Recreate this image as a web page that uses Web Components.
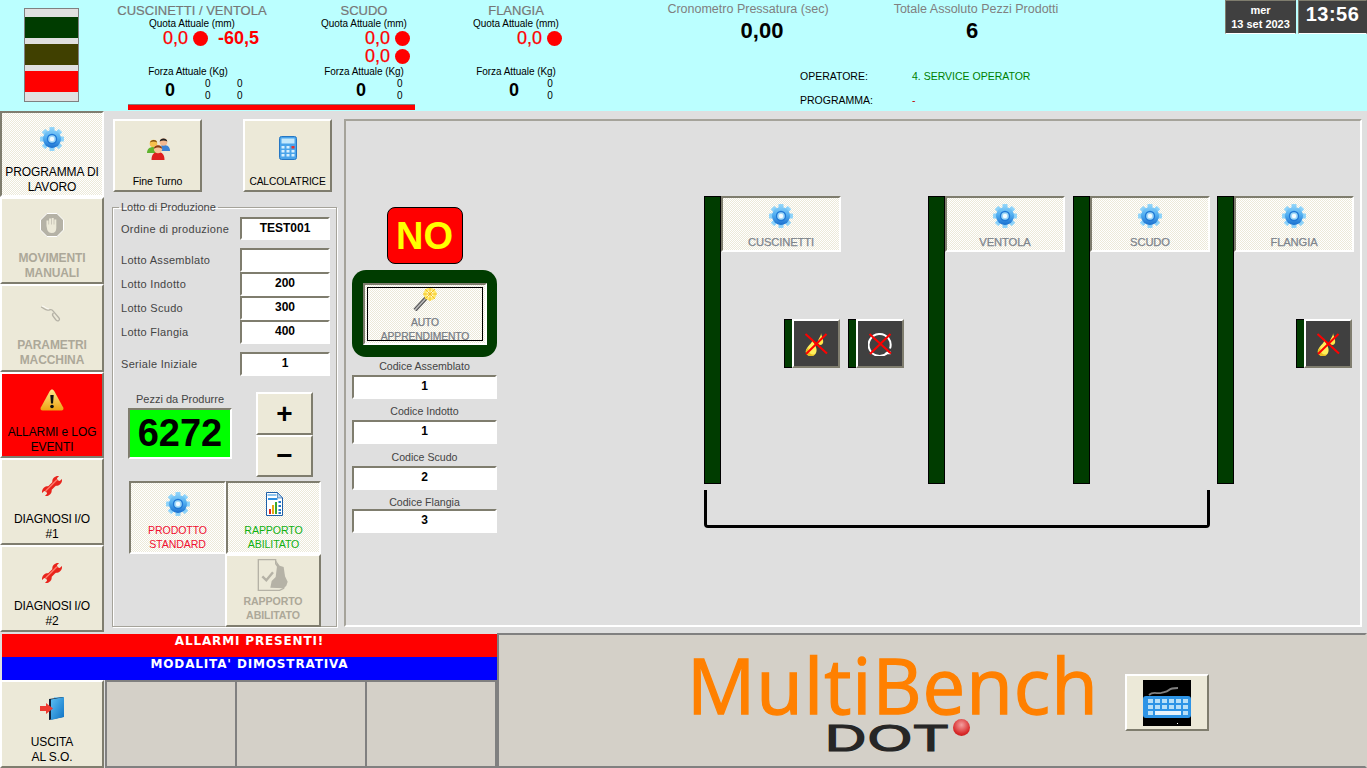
<!DOCTYPE html>
<html lang="it">
<head>
<meta charset="utf-8">
<title>MultiBench DOT</title>
<style>
  html, body { margin: 0; height: 100%; overflow: hidden; background: #dfdfdf; }
  body { font-family: "Liberation Sans", Arial, sans-serif; font-size: 12px; }
</style>
</head>
<body>

<hmi-screen>
  <hmi-header slot="header"></hmi-header>

  <hmi-nav slot="nav">
    <hmi-button icon="gear" variant="pressed" style="--label-bottom:0">PROGRAMMA DI<br>LAVORO</hmi-button>
    <hmi-button icon="stop" variant="disabled">MOVIMENTI<br>MANUALI</hmi-button>
    <hmi-button icon="wire" variant="disabled" style="--label-bottom:2px">PARAMETRI<br>MACCHINA</hmi-button>
    <hmi-button icon="warning" variant="alarm">ALLARMI e LOG<br>EVENTI</hmi-button>
    <hmi-button icon="wrench" style="word-spacing:-2px">DIAGNOSI&nbsp; I/O<br>#1</hmi-button>
    <hmi-button icon="wrench" style="word-spacing:-2px">DIAGNOSI&nbsp; I/O<br>#2</hmi-button>
  </hmi-nav>

  <hmi-lot-panel slot="lot"></hmi-lot-panel>
  <hmi-machine-panel slot="machine"></hmi-machine-panel>
  <hmi-footer slot="footer"></hmi-footer>
</hmi-screen>

<script>
  /* shared look of the old Windows controls */
  const BEVEL = `
    .raised { background: #ece9d8; border: 2px solid; border-color: #fff #7f7d6e #7f7d6e #fff; }
    .sunken { background: #fff; border: 2px solid; border-color: #7f7d6e #fff #fff #7f7d6e; }
    * { box-sizing: border-box; }
  `;

  const gearTeeth = [0, 45, 90, 135, 180, 225, 270, 315]
    .map(a => `<rect x="9.500" y="0" width="5" height="6.500" rx=".6" transform="rotate(${a} 12 12)"/>`).join('');

  const ICONS = {
    gear: `<defs><linearGradient id="g" gradientUnits="userSpaceOnUse" x1="0" y1="0" x2="0" y2="24">
        <stop offset="0" stop-color="#96d8fb"/><stop offset=".45" stop-color="#52aef0"/><stop offset="1" stop-color="#0a5cc4"/></linearGradient></defs>
      <g fill="url(#g)">${gearTeeth}<circle cx="12" cy="12" r="9"/></g>
      <circle cx="12" cy="12" r="5.200" fill="#1f78d6"/><circle cx="12" cy="12" r="3.800" fill="#9fd8f8"/><circle cx="12" cy="12" r="2.200" fill="#f4fbff"/>`,
    stop: `<path d="M7 .5h10L23.500 7v10L17 23.500H7L.5 17V7z" fill="#b5b2a6" stroke="#fff" stroke-width="1"/>
      <path d="M6.500 13V7.500h2v4h.6V5.500h2v6h.6V5h2v6.500h.6V6.500h2V15c0 3-1.500 5-4.500 5-2.500 0-3.500-1-4.500-3z" fill="#ece9d8"/>`,
    wire: `<path d="M1 7c3 1 4 4 8 3 2-.5 3-1 4 1l6 7c1.500 2-1 4-3 2l-3-4c-1-1-.5-2 .5-3" fill="none" stroke="#b5b2a6" stroke-width="1.300"/>
      <path d="M2 6c3 0 4 3 7 3" fill="none" stroke="#fff" stroke-width=".8"/>`,
    warning: `<defs><linearGradient id="w" x1="0" y1="0" x2="0" y2="1"><stop offset="0" stop-color="#fde98a"/><stop offset="1" stop-color="#eea210"/></linearGradient></defs>
      <path d="M12 1.500c1 0 1.600.6 2.200 1.600l9 16.500c.8 1.600 0 3-1.800 3H2.600c-1.800 0-2.600-1.400-1.800-3l9-16.500C10.400 2.100 11 1.500 12 1.500z" fill="url(#w)"/>
      <path d="M10.300 7h3.400l-.7 8.500h-2z" fill="#111"/><circle cx="12" cy="18.500" r="1.800" fill="#111"/>`,
    wrench: `<g transform="rotate(45 12 12)" fill="#e8231b">
        <rect x="9.500" y="7" width="5" height="10"/>
        <path d="M7.500 5C7.500 2.500 8.500 1 10 0v3l2 1 2-1V0c1.500 1 2.500 2.500 2.500 5 0 2.500-1.500 3.500-2 4h-5c-.5-.5-2-1.500-2-4z"/>
        <path d="M7.500 19c0 2.500 1 4 2.500 5v-3l2-1 2 1v3c1.500-1 2.500-2.500 2.500-5 0-2.500-1.500-3.500-2-4h-5c-.5.500-2 1.500-2 4z"/>
        <rect x="10.300" y="4" width="1.400" height="16" fill="#ff7a6a"/>
      </g>`,
    users: `<path d="M1 17c0-4 2.500-6 6.500-6s6 2 6 6z" fill="#5fb32e"/><circle cx="7.500" cy="7.500" r="3.800" fill="#f6c04c"/><path d="M4 6.500C4.500 3.500 10.500 3 11 6.500 9 5 6 5 4 6.500z" fill="#7a4a10"/>
      <path d="M12 15c0-4 2.500-6 6-6s6 2 6 6z" fill="#3a82d6"/><circle cx="17.500" cy="6" r="3.800" fill="#f2b890"/><path d="M13.700 5.500C14 1.500 21 1.500 21.300 5.500 19 4 16 4 13.700 5.500z" fill="#222"/>
      <path d="M5.500 24c0-5.500 2.500-8 6.500-8s6.500 2.500 6.500 8z" fill="#df1f1f"/><circle cx="12" cy="13" r="4.200" fill="#f8c498"/><path d="M7.800 13C8 8 16 8 16.200 13 14 11 10 11 7.800 13z" fill="#8a3c10"/>`,
    calc: `<rect x="3.500" y="0.500" width="17" height="23" rx="2" fill="#4aa4ea" stroke="#2476c4"/>
      <rect x="5.500" y="2.500" width="13" height="5" fill="#c4e8fb"/>
      <g fill="#d6effd"><rect x="5.500" y="10" width="3" height="2.500"/><rect x="10.500" y="10" width="3" height="2.500"/>
      <rect x="5.500" y="14" width="3" height="2.500"/><rect x="10.500" y="14" width="3" height="2.500"/><rect x="15.500" y="14" width="3" height="2.500"/>
      <rect x="5.500" y="18" width="3" height="2.500"/><rect x="10.500" y="18" width="3" height="2.500"/><rect x="15.500" y="18" width="3" height="2.500"/></g>
      <rect x="15.500" y="10" width="3" height="2.500" fill="#e8302a"/>`,
    wand: `<path d="M2 23L14 10" stroke="#555" stroke-width="4"/><path d="M2 23L14 10" stroke="#bbb" stroke-width="1.600"/>
      <circle cx="17" cy="7" r="6.500" fill="#ffe96a"/><circle cx="17" cy="7" r="3.500" fill="#fffbd0"/>
      <path d="M17 0v14M10 7h14M12 2l10 10M22 2L12 12" stroke="#f4c020" stroke-width="1"/>`,
    report: `<path d="M4.500 .5h11l5 5.500v17.500h-16z" fill="#fff" stroke="#1d5fa8"/><path d="M15.500 .5v5.500h5z" fill="#bcd8f0" stroke="#1d5fa8" stroke-width=".6"/>
      <rect x="6" y="6" width="9.500" height="2" fill="#2f8fe0"/><rect x="5.500" y="2" width="9" height="2" fill="#8ec4ee"/>
      <rect x="7" y="17" width="2" height="5" fill="#e02a20"/><rect x="10" y="13" width="2" height="9" fill="#e8a810"/><rect x="13" y="10" width="2" height="12" fill="#3aa82c"/>
      <g fill="#2478c8"><rect x="16.500" y="9" width="2.500" height="2"/><rect x="16.500" y="13" width="2.500" height="2"/><rect x="16.500" y="17" width="2.500" height="2"/><rect x="16.500" y="20" width="2.500" height="2"/></g>`,
    reportoff: `<path d="M1 .5h13v3L20 12v10l-3 1.500H1z" fill="none" stroke="#b5b2a6" stroke-width="1"/>
      <path d="M14 1l3 4 3 1 1 7 2 4-1 3-2 2-10-.5 1-5 3-3 1-8z" fill="#b5b2a6"/>
      <path d="M4 13l3 3 5-6" fill="none" stroke="#b5b2a6" stroke-width="1.800"/>`,
    door: `<defs><linearGradient id="d" x1="0" y1="0" x2="1" y2="1"><stop offset="0" stop-color="#5cc0f4"/><stop offset="1" stop-color="#0e72c4"/></linearGradient></defs>
      <rect x="14" y="1" width="10" height="20" fill="#8fcdf0"/><path d="M9 3l14-2v20l-14 3z" fill="#12233a"/><path d="M11 3.500l13-2.500v20l-13 3z" fill="url(#d)"/>
      <path d="M0 10h6V7l7 5.500L6 18v-3H0z" fill="#ee3a30"/>`,
    keyboard: `<rect width="48" height="46" fill="#000"/>
      <path d="M6 15c4-4 8-1 12-2s6-1 8-3 6-2 9-2" fill="none" stroke="#808080" stroke-width="1.800"/>
      <path d="M3 16h42q3 0 3 3v16q0 3-3 3H3q-3 0-3-3V19q0-3 3-3z" fill="#2d94e6"/>
      <g fill="#b8e0f8">
        <rect x="5" y="19" width="5" height="4"/><rect x="12" y="19" width="5" height="4"/><rect x="19" y="19" width="5" height="4"/><rect x="26" y="19" width="5" height="4"/><rect x="33" y="19" width="5" height="4"/>
        <rect x="40" y="19" width="5" height="4"/><rect x="5" y="25" width="5" height="4"/><rect x="12" y="25" width="5" height="4"/><rect x="19" y="25" width="5" height="4"/><rect x="26" y="25" width="5" height="4"/>
        <rect x="33" y="25" width="5" height="4"/><rect x="40" y="25" width="5" height="4"/><rect x="5" y="31" width="5" height="4"/><rect x="12" y="31" width="26" height="4" fill="#e8f4fc"/><rect x="40" y="31" width="5" height="4"/>
      </g><rect x="34" y="43" width="1" height="1" fill="#fff"/>`,
    flameoff: `<path d="M8.500 6C10 10 4 13 2 18c-1 4 2 6 5 6 4 0 6-3 5.500-7C12 13 8.500 10 8.500 6z" fill="#ffef5a"/><path d="M2 18c-1 4 2 6 5 6 1.500 0 3-.5 4-1.500C7 23 4 21 4.500 15.500z" fill="#e8c020"/>
      <path d="M17 1c.5 3-4 7-3 10 1 2.500 4 2.500 5 0s-1.500-7-2-10z" fill="#ffe84a"/>
      <path d="M1.500 2L23 21.500M22.500 2L2 22" stroke="#f00" stroke-width="2"/>`,
    ringoff: `<path d="M20 20A11 11 0 1 1 22 16.500" fill="none" stroke="#fff" stroke-width="2"/><path d="M17 21.500h5v-2" fill="none" stroke="#fff" stroke-width="1.500"/>
      <path d="M1.500 2L23 21.500M22.500 2L2 22" stroke="#f00" stroke-width="2"/>`
  };

  class HmiIcon extends HTMLElement {
    connectedCallback() {
      const name = this.getAttribute('name');
      const size = this.getAttribute('size') || 24;
      const box = name === 'keyboard' ? '0 0 48 46' : '0 0 24 24';
      const height = name === 'keyboard' ? 46 : size;
      this.attachShadow({ mode: 'open' }).innerHTML = `
        <style>:host { display: block; line-height: 0; } svg { display: block; }</style>
        <svg xmlns="http://www.w3.org/2000/svg" width="${size}" height="${height}" viewBox="${box}">${ICONS[name] || ''}</svg>`;
    }
  }
  customElements.define('hmi-icon', HmiIcon);

  /* Push button with icon over a two line caption. variant: raised, pressed, disabled, alarm */
  class HmiButton extends HTMLElement {
    connectedCallback() {
      const icon = this.getAttribute('icon');
      const size = this.getAttribute('icon-size') || 24;
      const variant = this.getAttribute('variant') || 'raised';
      this.attachShadow({ mode: 'open' }).innerHTML = `
        <style>
          ${BEVEL}
          :host { display: block; color: #000; font: 12px/15px "Liberation Sans", Arial, sans-serif; letter-spacing: -.1px; }
          .btn { height: 100%; display: flex; flex-direction: column; align-items: center;
                 padding-top: var(--icon-top, 14px); text-align: center; white-space: nowrap; }
          .label { margin-top: auto; margin-bottom: var(--label-drop, 0); padding-bottom: var(--label-bottom, 1px);
                   line-height: var(--line, 15px); color: var(--text, inherit); -webkit-text-stroke: var(--ink, 0) currentColor; }
          .pressed { background: repeating-conic-gradient(#fff 0 25%, #ece9d8 0 50%) 0 0 / 2px 2px;
                     border: 2px solid; border-color: #7f7d6e #fff #fff #7f7d6e; }
          .disabled .label { color: #aca899; font-weight: bold; }
          .alarm { background: #f00; }
        </style>
        <div class="btn ${variant === 'pressed' ? 'pressed' : 'raised'} ${variant}">
          ${icon ? `<hmi-icon name="${icon}" size="${size}"></hmi-icon>` : ''}
          <div class="label"><slot></slot></div>
        </div>`;
    }
  }
  customElements.define('hmi-button', HmiButton);

  class HmiScreen extends HTMLElement {
    constructor() {
      super();
      this.attachShadow({ mode: 'open' }).innerHTML = `
        <style>
          :host { display: grid; width: 1367px; height: 768px; overflow: hidden;
                  grid-template: 111px 521px 136px / 104px 233px 1fr;
                  grid-template-areas: "h h h" "n l m" "f f f"; }
          ::slotted([slot=header]) { grid-area: h; }
          ::slotted([slot=nav]) { grid-area: n; }
          ::slotted([slot=lot]) { grid-area: l; }
          ::slotted([slot=machine]) { grid-area: m; }
          ::slotted([slot=footer]) { grid-area: f; }
        </style>
        <slot name="header"></slot><slot name="nav"></slot><slot name="lot"></slot>
        <slot name="machine"></slot><slot name="footer"></slot>`;
    }
  }
  customElements.define('hmi-screen', HmiScreen);

  class HmiNav extends HTMLElement {
    constructor() {
      super();
      this.attachShadow({ mode: 'open' }).innerHTML = `
        <style>
          :host { display: grid; grid-template-rows: 86px 87px 88px 86px 87px 87px; }
          ::slotted(*) { --icon-top: 14px; }
        </style>
        <slot></slot>`;
    }
  }
  customElements.define('hmi-nav', HmiNav);

  /* One measuring axis of the header */
  class HmiAxis extends HTMLElement {
    connectedCallback() {
      const a = n => this.getAttribute(n);
      const valueX = a('value-x');
      const quote = (a('quote') || '0,0').split('|');
      const extra = a('extra');
      const small = (a('small') || '1').split('');
      const rows = quote.map((q, i) => `
        <div class="quote"><b>${q}</b><i></i>${i === 0 && extra ? `<b class="extra">${extra}</b>` : ''}</div>`).join('');
      const cols = small.map(() => '<div class="small"><span>0</span><span>0</span></div>').join('');
      this.attachShadow({ mode: 'open' }).innerHTML = `
        <style>
          ${BEVEL}
          :host { display: flex; flex-direction: column; align-items: center; width: var(--w); height: 104px;
                  font: 10px/10px "Liberation Sans", Arial, sans-serif; color: #000; padding-top: 3px; box-sizing: border-box; }
          .title { font-size: 13px; line-height: 15px; color: #777; white-space: nowrap; -webkit-text-stroke: .2px #777; }
          .cap { margin-top: 1px; white-space: nowrap; letter-spacing: -.05px; }
          .vals { align-self: stretch; height: 37px; padding-left: ${valueX}px; }
          .quote { display: flex; align-items: center; height: 18px; color: #f00; }
          .quote b { font: 18px/18px "Liberation Sans", Arial, sans-serif; width: 26px; text-align: right; white-space: nowrap; -webkit-text-stroke: .25px #f00; }
          .quote i { width: 15px; height: 15px; border-radius: 50%; background: #f00; margin-left: 5px; }
          .quote .extra { font-weight: bold; margin-left: 10px; width: auto; -webkit-text-stroke: 0; }
          .force { align-self: stretch; display: flex; align-items: center; height: 24px; margin-top: 1px; padding-left: ${a('force-x')}px; }
          .big { font: bold 18px/20px "Liberation Sans", Arial, sans-serif; width: ${a('big-w') || 40}px; }
          .small { display: flex; flex-direction: column; width: 32px; line-height: 12px; }
        </style>
        <div class="title">${a('title')}</div>
        <div class="cap">Quota Attuale (mm)</div>
        <div class="vals">${rows}</div>
        <div class="cap" style="transform: translateX(${a('forza-shift') || 0}px)">Forza Attuale (Kg)</div>
        <div class="force"><div class="big">0</div>${cols}</div>`;
    }
  }
  customElements.define('hmi-axis', HmiAxis);

  class HmiHeader extends HTMLElement {
    constructor() {
      super();
      this.attachShadow({ mode: 'open' }).innerHTML = `
        <style>
          ${BEVEL}
          :host { display: grid; background: #bbffff; height: 111px; overflow: hidden;
                  grid-template-columns: 110px 164px 180px 124px 647px 142px; grid-template-rows: 104px 7px;
                  font-family: "Liberation Sans", Arial, sans-serif; }
          .tower { grid-column: 1; grid-row: 1 / 3; padding: 8px 0 0 24px; }
          .tower div { width: 55px; height: 94px; border: 1px solid #808080; background: #e0e0e0; display: flex; flex-direction: column; gap: 6px; padding-top: 8px; }
          .tower span { height: 21px; display: block; }
          .bar { grid-column: 2 / 4; grid-row: 2; margin-left: 18px; width: 287px; height: 6px; background: #f00; border-top: 1px solid #808080; }
          hmi-axis { grid-row: 1; }
          .info { grid-column: 5; grid-row: 1 / 3; font-size: 12.500px; line-height: 14px; }
          .counters { display: flex; height: 64px; }
          .counter { flex: none; display: flex; flex-direction: column; align-items: center; white-space: nowrap; padding-top: 2px; color: #808080; }
          .counter b { color: #000; font-size: 22px; line-height: 26px; margin-top: 2px; }
          .people { display: grid; grid-template-columns: 112px auto; grid-auto-rows: 24px; margin-left: 222px; font-size: 10.500px; align-items: center; color: #000; }
          .people .green { color: #008000; }
          .people .red { color: #c00000; }
          .clock { grid-column: 6; grid-row: 1 / 3; display: flex; gap: 2px; align-items: flex-start; }
          .clock div { background: #404040; color: #fff; font-weight: bold; height: 34px; text-align: center;
                       border: 1px solid; border-color: #7f7d6e #404040 #fff #7f7d6e; }
          .date { width: 71px; font-size: 11px; line-height: 14px; padding-top: 2px; }
          .time { width: 69px; font-size: 20px; line-height: 27px; letter-spacing: .5px; }
        </style>
        <div class="tower"><div>
          <span style="background:#003c00"></span><span style="background:#404000"></span><span style="background:#f00"></span>
        </div></div>
        <hmi-axis style="--w:164px" title="CUSCINETTI / VENTOLA" extra="-60,5" value-x="52" force-x="55" small="12" forza-shift="-4"></hmi-axis>
        <hmi-axis style="--w:180px" title="SCUDO" quote="0,0|0,0" value-x="90" force-x="82" big-w="41" small="1"></hmi-axis>
        <hmi-axis style="--w:124px" title="FLANGIA" value-x="62" force-x="55" small="1"></hmi-axis>
        <div class="info">
          <div class="counters">
            <div class="counter" style="width:340px">Cronometro Pressatura (sec)<b style="transform:translateX(14px)">0,00</b></div>
            <div class="counter" style="width:116px">Totale Assoluto Pezzi Prodotti<b style="transform:translateX(-4px)">6</b></div>
          </div>
          <div class="people">
            <span>OPERATORE:</span><span class="green">4. SERVICE OPERATOR</span>
            <span>PROGRAMMA:</span><span class="red">-</span>
          </div>
        </div>
        <div class="clock">
          <div class="date">mer<br>13 set 2023</div>
          <div class="time">13:56</div>
        </div>
        <div class="bar"></div>`;
    }
  }
  customElements.define('hmi-header', HmiHeader);

  /* Caption + sunken value box */
  class HmiField extends HTMLElement {
    connectedCallback() {
      const label = this.getAttribute('label') || '';
      const value = this.getAttribute('value') || '';
      const stacked = this.hasAttribute('stacked');
      this.attachShadow({ mode: 'open' }).innerHTML = `
        <style>
          ${BEVEL}
          :host { display: grid; color: #444; font: 11px/14px "Liberation Sans", Arial, sans-serif; align-items: center;
                  grid-template-columns: ${stacked ? '1fr' : '1fr 90px'}; }
          .label { ${stacked ? 'text-align: center; height: 15px; font-size: 10.600px; margin-top: var(--lab-top, -1px); margin-bottom: var(--lab-bot, 1px);' : 'letter-spacing: .3px;'} white-space: nowrap; }
          .box { height: var(--box, 24px); color: #000; font: bold 12px/18px "Liberation Sans", Arial, sans-serif; text-align: center; }
        </style>
        <span class="label">${label}</span>
        <div class="box sunken">${value}</div>`;
    }
  }
  customElements.define('hmi-field', HmiField);

  class HmiLotPanel extends HTMLElement {
    constructor() {
      super();
      this.attachShadow({ mode: 'open' }).innerHTML = `
        <style>
          ${BEVEL}
          :host { display: block; padding: 8px 0 0 8px; font: 11px/14px "Liberation Sans", Arial, sans-serif; }
          .top { display: flex; justify-content: space-between; padding: 0 4px 0 1px; width: 224px; }
          .top hmi-button { width: 89px; height: 73px; --icon-top: 15px; font-size: 10.600px; }
          .top hmi-button + hmi-button { font-size: 10.200px; }
          fieldset { margin: 8px 0 0; padding: 3px 6px 0 8px; width: 225px; height: 427px; min-inline-size: 0;
                     border: 1px solid #a5a39a; box-shadow: inset 1px 1px 0 #fff, 1px 1px 0 #fff; color: #444; }
          legend { padding: 0 2px; margin-left: -2px; height: 14px; font-size: 11px; }
          hmi-field { height: 24px; }
          .gap { margin-top: 8px; }
          .pieces { display: flex; gap: 24px; margin: 16px 0 0 7px; }
          .count { width: 104px; text-align: center; }
          .count span { display: block; height: 16px; line-height: 15px; }
          .count div { height: 51px; background: #0f0; font: bold 38px/46px "Liberation Sans", Arial, sans-serif; color: #000;
                       border: 2px solid; border-color: #7f7d6e #fff #fff #7f7d6e; }
          .steps { display: flex; flex-direction: column; width: 57px; }
          .steps div { flex: none; height: 43px; display: flex; align-items: center; justify-content: center; font: bold 28px/28px "Liberation Sans", Arial, sans-serif; color: #000; }
          .toggles { display: grid; grid-template: 73px 73px / 97px 95px; margin: 4px 0 0 8px; width: 192px; }
          .toggles hmi-button { --icon-top: 9px; --line: 14px; --label-bottom: 1px; font-size: 10.600px; }
          .toggles hmi-button[variant=disabled] { --icon-top: 3px; --label-bottom: 3px; margin-left: -1px; width: 96px; }
        </style>
        <div class="top">
          <hmi-button icon="users">Fine Turno</hmi-button>
          <hmi-button icon="calc">CALCOLATRICE</hmi-button>
        </div>
        <fieldset>
          <legend>Lotto di Produzione</legend>
          <hmi-field label="Ordine di produzione" value="TEST001" style="--box:23px;height:23px"></hmi-field>
          <hmi-field label="Lotto Assemblato" value="" class="gap"></hmi-field>
          <hmi-field label="Lotto Indotto" value="200"></hmi-field>
          <hmi-field label="Lotto Scudo" value="300"></hmi-field>
          <hmi-field label="Lotto Flangia" value="400"></hmi-field>
          <hmi-field label="Seriale Iniziale" value="1" class="gap"></hmi-field>
          <div class="pieces">
            <div class="count"><span>Pezzi da Produrre</span><div>6272</div></div>
            <div class="steps">
              <div class="raised">+</div>
              <div class="raised" style="height:42px">&minus;</div>
            </div>
          </div>
          <div class="toggles">
            <hmi-button icon="gear" variant="pressed" style="--text:#f01030">PRODOTTO<br>STANDARD</hmi-button>
            <hmi-button icon="report" variant="pressed" style="--text:#10b010">RAPPORTO<br>ABILITATO</hmi-button>
            <span></span>
            <hmi-button icon="reportoff" icon-size="32" variant="disabled">RAPPORTO<br>ABILITATO</hmi-button>
          </div>
        </fieldset>`;
    }
  }
  customElements.define('hmi-lot-panel', HmiLotPanel);

  /* Column header of the bench diagram: green bar with the station button */
  class HmiStation extends HTMLElement {
    connectedCallback() {
      this.attachShadow({ mode: 'open' }).innerHTML = `
        <style>
          ${BEVEL}
          :host { position: absolute; top: 75px; left: var(--x); display: flex; align-items: flex-start; }
          .post { width: 17px; height: 288px; background: #003c00; border: 1px solid #000; }
          hmi-button { width: 120px; height: 56px; --icon-top: 6px; --label-bottom: 0; --text: #7d848c; --ink: .25px; font-size: 11.200px; }
        </style>
        <div class="post"></div>
        <hmi-button icon="gear" variant="pressed"><slot></slot></hmi-button>`;
    }
  }
  customElements.define('hmi-station', HmiStation);

  /* Small dark status tile over the diagram */
  class HmiTile extends HTMLElement {
    connectedCallback() {
      this.attachShadow({ mode: 'open' }).innerHTML = `
        <style>
          ${BEVEL}
          :host { position: absolute; top: 198px; left: var(--x); display: flex; width: 56px; height: 49px; }
          .tag { width: 8px; background: #003c00; border-left: 1px solid #000; border-top: 1px solid #000; border-bottom: 1px solid #000; }
          .face { flex: 1; background: #404040; border: 2px solid; border-color: #fff #7f7d6e #7f7d6e #fff; display: flex; align-items: center; justify-content: center; }
        </style>
        <div class="tag"></div>
        <div class="face"><hmi-icon name="${this.getAttribute('icon')}"></hmi-icon></div>`;
    }
  }
  customElements.define('hmi-tile', HmiTile);

  class HmiMachinePanel extends HTMLElement {
    constructor() {
      super();
      this.attachShadow({ mode: 'open' }).innerHTML = `
        <style>
          ${BEVEL}
          :host { display: block; padding: 8px 5px 5px 7px; font: 11px/14px "Liberation Sans", Arial, sans-serif; }
          .frame { display: flex; height: 508px; border: 2px solid; border-color: #a5a39a #fff #fff #a5a39a; }
          .col { width: 151px; padding: 86px 0 0 6px; flex: none; display: flex; flex-direction: column; align-items: center; }
          .no { width: 76px; height: 57px; background: #f00; border: 1px solid #000; border-radius: 8px; color: #ff0;
                font: bold 38px/57px "Liberation Sans", Arial, sans-serif; text-align: center; }
          .auto { width: 145px; height: 87px; margin-top: 6px; background: #003c00; border-radius: 14px; padding: 13px 10px 12px 11px; }
          .auto hmi-button { height: 62px; --icon-top: 2px; --line: 14px; --label-bottom: 0; --label-drop: -1px; --text: #777c84; --ink: .25px; font-size: 10.300px; position: relative; }
          .auto hmi-button::after { content: ""; position: absolute; inset: 4px; border: 1px solid #000; }
          hmi-field { width: 145px; --box: 24px; color: #444; }
          .codes { margin-top: 3px; display: flex; flex-direction: column; gap: 6px; }
          .canvas { position: relative; flex: 1; }
          .bracket { position: absolute; left: 207px; top: 369px; width: 506px; height: 38px; border: solid #000; border-width: 0 3px 3px; border-radius: 0 0 4px 4px; }
        </style>
        <div class="frame">
          <div class="col">
            <div class="no">NO</div>
            <div class="auto"><hmi-button icon="wand" variant="pressed">AUTO<br>APPRENDIMENTO</hmi-button></div>
            <div class="codes">
              <hmi-field stacked label="Codice Assemblato" value="1"></hmi-field>
              <hmi-field stacked label="Codice Indotto" value="1"></hmi-field>
              <hmi-field stacked label="Codice Scudo" value="2" style="margin-top:1px"></hmi-field>
              <hmi-field stacked label="Codice Flangia" value="3" style="margin-top:-2px;--lab-top:1px;--lab-bot:-1px"></hmi-field>
            </div>
          </div>
          <div class="canvas">
            <hmi-station style="--x:207px">CUSCINETTI</hmi-station>
            <hmi-station style="--x:431px">VENTOLA</hmi-station>
            <hmi-station style="--x:576px">SCUDO</hmi-station>
            <hmi-station style="--x:720px">FLANGIA</hmi-station>
            <hmi-tile icon="flameoff" style="--x:287px"></hmi-tile>
            <hmi-tile icon="ringoff" style="--x:351px"></hmi-tile>
            <hmi-tile icon="flameoff" style="--x:799px"></hmi-tile>
            <div class="bracket"></div>
          </div>
        </div>`;
    }
  }
  customElements.define('hmi-machine-panel', HmiMachinePanel);

  class HmiFooter extends HTMLElement {
    constructor() {
      super();
      this.attachShadow({ mode: 'open' }).innerHTML = `
        <style>
          ${BEVEL}
          :host { display: grid; grid-template-columns: 497px 1fr; height: 136px; font-family: "Liberation Sans", Arial, sans-serif; padding-top: 1px; box-sizing: border-box; }
          .left { display: flex; flex-direction: column; padding-top: 1px; }
          .msg { height: 23px; margin-left: 2px; color: #fff; text-align: center; font: bold 12px/15px "DejaVu Sans", sans-serif; letter-spacing: .85px; }
          .lower { display: flex; height: 88px; }
          .lower hmi-button { width: 104px; --icon-top: 14px; }
          .cells { flex: 1; margin-left: 1px; display: grid; grid-template-columns: repeat(3, 1fr); gap: 2px; background: #808080; padding: 2px; }
          .cells div { background: #d4d0c8; }
          .brand { background: #d4d0c8; border: 2px solid #808080; border-right-color: #d4d0c8; display: flex; align-items: center; padding: 0 0 4px 188px; gap: 29px; }
          .logo { width: 409px; height: 103px; position: relative; }
          .multi { display: block; font: 400 76px/70px "Open Sans", sans-serif; color: #ff8000; white-space: nowrap; margin-top: 3px; letter-spacing: 1px; -webkit-text-stroke: 1.300px #ff8000; }
          .dot { position: absolute; left: 138px; top: 77px; font: 400 36px/30px "Liberation Sans", sans-serif; color: #262626; letter-spacing: 1px; -webkit-text-stroke: 1.200px #262626; transform: scale(1.58, 1); transform-origin: left top; }
          .ball { position: absolute; left: 266px; top: 72px; width: 17px; height: 17px; border-radius: 50%; background: radial-gradient(circle at 50% 35%, #f4a0a0, #d82828 65%, #b01818); }
          .kbd { width: 84px; height: 57px; margin-top: 8px; display: flex; align-items: center; justify-content: center; padding-right: 1px; }
        </style>
        <div class="left">
          <div class="msg" style="background:#f00">ALLARMI PRESENTI!</div>
          <div class="msg" style="background:#00f">MODALITA' DIMOSTRATIVA</div>
          <div class="lower">
            <hmi-button icon="door">USCITA<br>AL S.O.</hmi-button>
            <div class="cells"><div></div><div></div><div></div></div>
          </div>
        </div>
        <div class="brand">
          <div class="logo">
            <span class="multi">MultiBench</span>
            <span class="dot">DOT</span>
            <span class="ball"></span>
          </div>
          <div class="kbd raised"><hmi-icon name="keyboard" size="48"></hmi-icon></div>
        </div>`;
    }
  }
  customElements.define('hmi-footer', HmiFooter);
</script>
</body>
</html>
